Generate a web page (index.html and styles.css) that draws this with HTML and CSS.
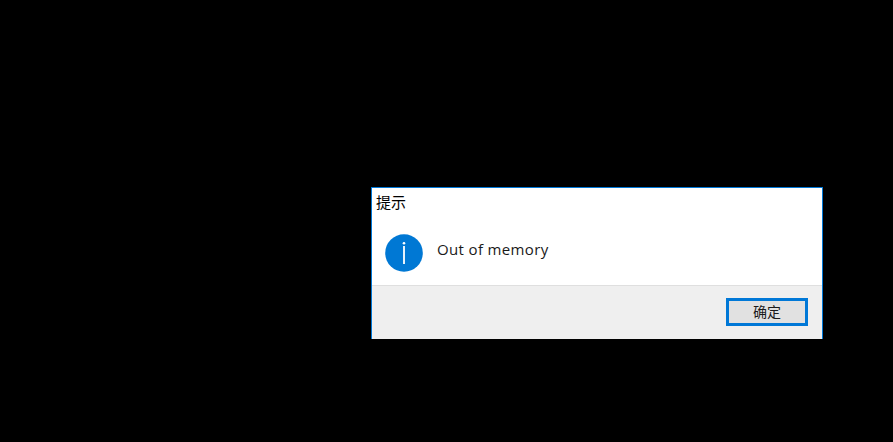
FILE: index.html
```html
<!DOCTYPE html>
<html lang="zh">
<head>
    <meta charset="UTF-8">
    <meta name="viewport" content="width=device-width, initial-scale=1.0">
    <title>提示</title>
    <link rel="stylesheet" href="styles.css">
</head>
<body>
    <!-- Message box -->
    <div class="dialog">
        <div class="dialog-title">提示</div>
        <div class="dialog-body">
            <svg class="info-icon" viewBox="0 0 38 38" width="38" height="38">
                <circle cx="19" cy="19" r="18.8" fill="#0078d4"/>
                <circle cx="19" cy="9.2" r="1.3" fill="#fff"/>
                <rect x="18.1" y="12" width="1.8" height="18" fill="#fff"/>
            </svg>
            <span class="dialog-text">Out of memory</span>
        </div>
        <div class="dialog-footer">
            <div class="button-ok">确定</div>
        </div>
    </div>
</body>
</html>
```

FILE: styles.css
```css
html, body {
    height: 100%;
}

body {
    margin: 0;
    padding: 187px 0 0 371px;
    box-sizing: border-box;
    background-color: #000;
    overflow: hidden;
}

/* Window */
.dialog {
    width: 452px;
    height: 152px;
    box-sizing: border-box;
    display: flex;
    flex-direction: column;
    background-color: #fff;
    border: 1px solid #0078d7;
    border-bottom: none;
    font-family: "Noto Sans CJK SC", "Liberation Sans", sans-serif;
}

.dialog-title {
    padding: 4px 0 0 4px;
    height: 25px;
    font-size: 15px;
    line-height: 20px;
    color: #000;
}

.dialog-body {
    flex: 1;
    display: flex;
    align-items: center;
    padding: 4px 0 0 13px;
    gap: 14px;
}

.info-icon {
    flex: none;
}

.dialog-text {
    font-family: "Open Sans", "Noto Sans", sans-serif;
    font-size: 15px;
    letter-spacing: 0.35px;
    color: #1a1a1a;
    margin-bottom: 8px;
}

/* Bottom strip */
.dialog-footer {
    height: 54px;
    box-sizing: border-box;
    display: flex;
    justify-content: flex-end;
    align-items: flex-start;
    padding: 12px 14px 0 0;
    background-color: #efefef;
    border-top: 1px solid #dfdfdf;
}

.button-ok {
    width: 82px;
    height: 28px;
    box-sizing: border-box;
    display: flex;
    justify-content: center;
    align-items: center;
    padding-bottom: 2px;
    background-color: #e1e1e1;
    border: 3px solid #0078d7;
    font-size: 14px;
    color: #1a1a1a;
}
```
